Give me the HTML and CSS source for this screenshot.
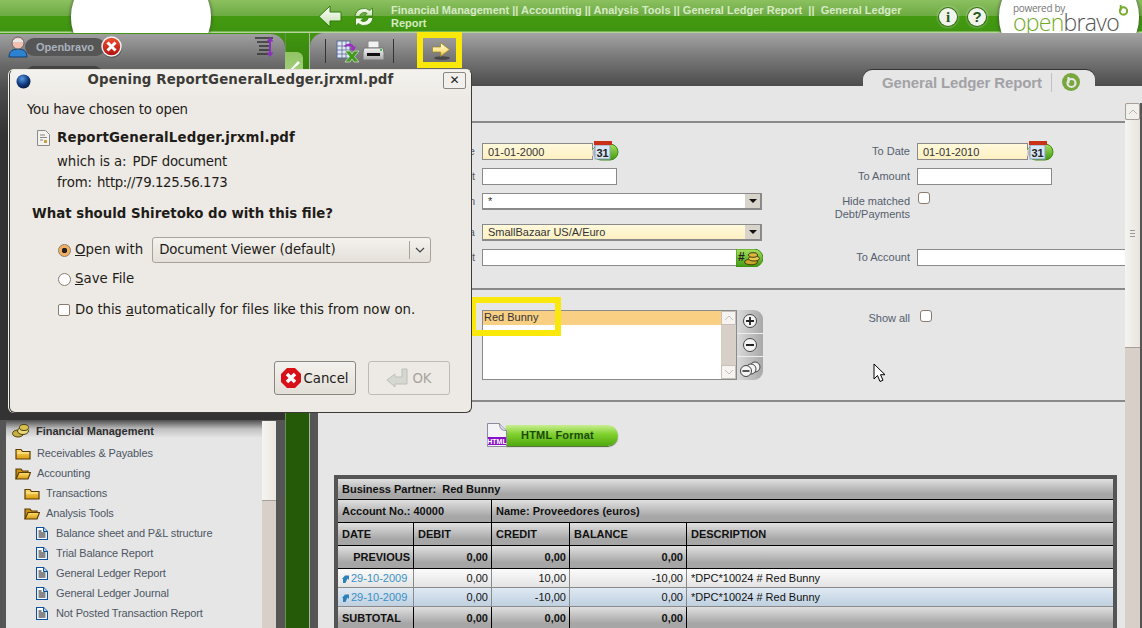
FILE: index.html
```html
<!DOCTYPE html>
<html lang="en">
<head>
<meta charset="utf-8">
<title>General Ledger Report</title>
<link rel="stylesheet" href="styles.css">
</head>
<body>
<svg class="sprite" aria-hidden="true">
  <defs>
    <linearGradient id="gYellow" x1="0" y1="0" x2="0" y2="1"><stop offset="0" stop-color="#fffbd0"/><stop offset=".6" stop-color="#fbe58a"/><stop offset="1" stop-color="#e2b030"/></linearGradient>
    <linearGradient id="gWhite" x1="0" y1="0" x2="0" y2="1"><stop offset="0" stop-color="#ffffff"/><stop offset="1" stop-color="#c4e0ac"/></linearGradient>
    <linearGradient id="gRed" x1="0" y1="0" x2="0" y2="1"><stop offset="0" stop-color="#f05030"/><stop offset="1" stop-color="#b01010"/></linearGradient>
    <linearGradient id="gGreen" x1="0" y1="0" x2="0" y2="1"><stop offset="0" stop-color="#a8e060"/><stop offset="1" stop-color="#3f9a10"/></linearGradient>
    <linearGradient id="gFolder" x1="0" y1="0" x2="0" y2="1"><stop offset="0" stop-color="#ffe070"/><stop offset="1" stop-color="#d89a10"/></linearGradient>
    <radialGradient id="gGlobe" cx=".4" cy=".3" r=".8"><stop offset="0" stop-color="#5a9ae0"/><stop offset=".55" stop-color="#123a80"/><stop offset="1" stop-color="#06102a"/></radialGradient>
    <linearGradient id="gGrey" x1="0" y1="0" x2="0" y2="1"><stop offset="0" stop-color="#f4f4f4"/><stop offset="1" stop-color="#a8a8a8"/></linearGradient>
    <symbol id="i-folder" viewBox="0 0 16 13"><path d="M1 2.500h5l1.500 2H15V12H1z" fill="url(#gFolder)" stroke="#5a3c04" stroke-width="1.200"/><path d="M2 6h12" stroke="#fff0a0"/></symbol>
    <symbol id="i-folder-open" viewBox="0 0 16 13"><path d="M1 12V2h5l1.500 2H13v2" fill="#c89018" stroke="#5a3c04" stroke-width="1.200"/><path d="M1 12l3-6.500h11.500L13 12z" fill="url(#gFolder)" stroke="#5a3c04" stroke-width="1.200"/></symbol>
    <symbol id="i-doc" viewBox="0 0 12 13"><path d="M.5.500h7l4 4v8H.5z" fill="#fff" stroke="#0d4f9c" stroke-width="1.200"/><path d="M7.500.5v4h4" fill="#bcd4ee" stroke="#0d4f9c"/><path d="M2.500 4h3M2.500 6h7M2.500 8h7M2.500 10h7" stroke="#111"/></symbol>
    <symbol id="i-coins" viewBox="0 0 18 14"><ellipse cx="6" cy="9.500" rx="5.500" ry="3.500" fill="#c8b040" stroke="#4a4010"/><ellipse cx="11" cy="7" rx="5.500" ry="3.500" fill="#e8d878" stroke="#4a4010"/><ellipse cx="12" cy="3.500" rx="4.500" ry="3" fill="#d8c050" stroke="#4a4010"/></symbol>
    <symbol id="i-cal" viewBox="0 0 27 21"><rect x="1" y="3" width="25" height="16" rx="8" fill="url(#gGreen)" stroke="#3f8a10"/><circle cx="5" cy="12" r="5" fill="#b8b8b8" stroke="#eee"/><rect x="3" y="4" width="15" height="14" fill="#d8e6f6" stroke="#8aa0c0"/><rect x="2" y="0" width="18" height="4" fill="#c83018"/><text x="10.500" y="15.500" class="cal-num">31</text></symbol>
    <symbol id="i-close-red" viewBox="0 0 22 22"><circle cx="11" cy="12" r="10" fill="#222" opacity=".4"/><circle cx="10.500" cy="10.500" r="9.500" fill="url(#gRed)" stroke="#f2f2f2" stroke-width="1.500"/><path d="M6.500 6.500l8 8M14.500 6.500l-8 8" stroke="#fff" stroke-width="3"/></symbol>
  </defs>
</svg>

<div class="app">
  <header class="topbar">
    <div class="blob"></div>
    <svg class="nav-back" viewBox="0 0 24 23" width="24" height="23"><path d="M1 11.500L12 1v6h11v9H12v6z" fill="url(#gWhite)" stroke="#2f7a0c"/></svg>
    <svg class="nav-refresh" viewBox="0 0 20 20" width="20" height="20"><path d="M1 9.500A9 9 0 0 1 15.800 3.500L18.500 1v8h-8l2.600-2.700A5 5 0 0 0 5.500 9.500z" fill="url(#gWhite)" stroke="#2f7a0c" stroke-width=".8"/><path d="M19 10.500A9 9 0 0 1 4.200 16.500L1.500 19v-8h8l-2.600 2.700A5 5 0 0 0 14.500 10.500z" fill="#f2fae8" stroke="#2f7a0c" stroke-width=".8"/></svg>
    <div class="crumbs">Financial Management || Accounting || Analysis Tools || General Ledger Report &nbsp;|| &nbsp;General Ledger Report</div>
    <span class="round-btn round-info">i</span>
    <span class="round-btn round-help">?</span>
    <div class="logo">
      <span class="logo-powered">powered by</span>
      <span class="logo-name"><span class="logo-open">open</span><span class="logo-bravo">bravo</span></span>
      <svg class="logo-mark" viewBox="0 0 12 12" width="11" height="11"><circle cx="6" cy="6.500" r="4" fill="none" stroke="#76ad2c" stroke-width="2.200"/><path d="M3 0v6" stroke="#76ad2c" stroke-width="2.200"/></svg>
    </div>
  </header>

  <div class="work">
    <aside class="sidebar">
      <div class="side-head">
        <div class="user-row">
          <svg class="user-icon" viewBox="0 0 20 22" width="20" height="22"><path d="M1 21c0-6 4-8 9-8s9 2 9 8z" fill="#2d82d0" stroke="#123f70"/><circle cx="10" cy="7" r="6" fill="#f0c0b0" stroke="#666"/><path d="M4.500 6a6 6 0 0 1 11 0z" fill="#e8e8e8"/></svg>
          <span class="user-pill">Openbravo</span>
          <svg class="user-close" width="22" height="22"><use href="#i-close-red"/></svg>
          <svg class="expand-icon" viewBox="0 0 22 22" width="22" height="22"><path d="M1 2h18M3 6h12M5 10h10M5 14h10M3 18h12" stroke="#333" stroke-width="1.500"/><path d="M16 1l3.500 4.500h-2.500v11h2.500L16 21l-3.500-4.500H15v-11h-2.500z" fill="#8a2fc0"/></svg>
        </div>
        <div class="user-row-two">
          <span class="role-dot"></span>
          <span class="role-pill"></span>
        </div>
      </div>
      <div class="menu">
        <nav class="tree">
          <div class="tree-head"><svg class="ti-coins" width="18" height="14"><use href="#i-coins"/></svg>Financial Management</div>
          <div class="tree-row lv1"><svg width="16" height="13"><use href="#i-folder"/></svg>Receivables &amp; Payables</div>
          <div class="tree-row lv1"><svg width="16" height="13"><use href="#i-folder-open"/></svg>Accounting</div>
          <div class="tree-row lv2"><svg width="16" height="13"><use href="#i-folder"/></svg>Transactions</div>
          <div class="tree-row lv2"><svg width="16" height="13"><use href="#i-folder-open"/></svg>Analysis Tools</div>
          <div class="tree-row lv3"><svg width="12" height="13"><use href="#i-doc"/></svg>Balance sheet and P&amp;L structure</div>
          <div class="tree-row lv3"><svg width="12" height="13"><use href="#i-doc"/></svg>Trial Balance Report</div>
          <div class="tree-row lv3"><svg width="12" height="13"><use href="#i-doc"/></svg>General Ledger Report</div>
          <div class="tree-row lv3"><svg width="12" height="13"><use href="#i-doc"/></svg>General Ledger Journal</div>
          <div class="tree-row lv3"><svg width="12" height="13"><use href="#i-doc"/></svg>Not Posted Transaction Report</div>
          <div class="tree-row lv3"><svg width="12" height="13"><use href="#i-folder"/></svg></div>
        </nav>
        <div class="side-scroll"><div class="side-thumb"></div></div>
      </div>
    </aside>

    <div class="splitter"><div class="split-tab"><svg viewBox="0 0 12 12" width="12" height="12"><path d="M1 11L9 2l2 2-8 7z" fill="#fff"/></svg></div></div>

    <main class="content">
      <div class="content-head">
        <div class="toolbar">
          <span class="tool-sep"></span>
          <svg class="tb-excel" viewBox="0 0 23 23" width="23" height="23"><rect x="1" y="1" width="13" height="17" fill="#dfe8f6" stroke="#5a6a90"/><path d="M1 6h13M1 10h13M1 14h13M6 1v17M10 1v17" stroke="#5a6a90" stroke-width=".8"/><path d="M8 6c4-4 9-3 10 1l2-1-2 5-4-2 2-1c-1-2-4-3-7-1z" fill="#9a2fc0"/><path d="M9 11h5l2 3 2-3h5l-4.500 5.500L23 22h-5l-2-3-2 3H9l4.500-5.500z" fill="#3f9a20" stroke="#eef6e0" stroke-width=".6"/></svg>
          <svg class="tb-print" viewBox="0 0 23 23" width="23" height="23"><path d="M6 1h11v7H6z" fill="#f2f2f2" stroke="#888"/><path d="M2 8h19l1 5v7H1v-7z" fill="url(#gGrey)" stroke="#777"/><rect x="5" y="13" width="13" height="3" fill="#111"/><rect x="18" y="9" width="2" height="2" fill="#40c040"/></svg>
          <span class="tool-sep tool-sep-b"></span>
          <svg class="tb-next" viewBox="0 0 18 18" width="18" height="18"><ellipse cx="10" cy="16" rx="8" ry="1.800" fill="#333" opacity=".7"/><path d="M.5 5h8V.8L17.500 7.500 8.500 14.500V10h-8z" fill="url(#gYellow)" stroke="#9a8420" stroke-width=".7"/></svg>
        </div>
        <div class="tab">
          <span class="tab-title">General Ledger Report</span>
          <svg viewBox="0 0 18 18" width="18" height="18"><circle cx="9" cy="9" r="9" fill="#78a83c"/><circle cx="9.500" cy="10" r="4" fill="none" stroke="#e6e6e6" stroke-width="2.200"/><path d="M6.500 4v6" stroke="#e6e6e6" stroke-width="2.200"/></svg>
        </div>
      </div>

      <div class="panel">
        <div class="scroll-body">
          <section class="section filters">
            <label class="lbl">From Date</label>
            <div class="field"><input class="inp inp-date req" value="01-01-2000"><svg class="cal" width="27" height="21"><use href="#i-cal"/></svg></div>
            <label class="lbl">To Date</label>
            <div class="field"><input class="inp inp-date req" value="01-01-2010"><svg class="cal" width="27" height="21"><use href="#i-cal"/></svg></div>

            <label class="lbl">From Amount</label>
            <div class="field"><input class="inp inp-num"></div>
            <label class="lbl">To Amount</label>
            <div class="field"><input class="inp inp-num"></div>

            <label class="lbl">Organization</label>
            <div class="field"><div class="select"><span>*</span><span class="sel-btn"></span></div></div>
            <label class="lbl lbl-two">Hide matched<br>Debt/Payments</label>
            <div class="field"><input class="check" type="checkbox"></div>

            <label class="lbl">Accounting Schema</label>
            <div class="field"><div class="select req"><span>SmallBazaar US/A/Euro</span><span class="sel-btn"></span></div></div>
            <span></span><span></span>

            <label class="lbl">From Account</label>
            <div class="field"><input class="inp inp-acct">
              <svg class="acct-btn" viewBox="0 0 27 18" width="27" height="18"><path d="M0 0h18a9 9 0 0 1 0 18H0z" fill="url(#gGreen)" stroke="#3f8a10"/><text x="2" y="12" class="acct-hash">#</text><ellipse cx="15" cy="13" rx="6.500" ry="2.800" fill="#c8a830" stroke="#4a3a08"/><ellipse cx="18" cy="9.500" rx="5.500" ry="2.500" fill="#e8c850" stroke="#4a3a08"/><ellipse cx="17" cy="6" rx="4.500" ry="2.300" fill="#d8b840" stroke="#4a3a08"/></svg></div>
            <label class="lbl">To Account</label>
            <div class="field"><input class="inp inp-wide"></div>
          </section>

          <section class="section partners">
            <label class="lbl">Business Partner</label>
            <div class="listwrap">
              <div class="listbox">
                <div class="list-items"><div class="list-sel">Red Bunny</div></div>
                <div class="list-scroll"><span class="sb-btn"><svg viewBox="0 0 10 6" width="10" height="6"><path d="M1 5l4-4 4 4" fill="none" stroke="#c8c0b8"/></svg></span><span class="sb-btn"><svg viewBox="0 0 10 6" width="10" height="6"><path d="M1 1l4 4 4-4" fill="none" stroke="#c8c0b8"/></svg></span></div>
              </div>
              <div class="list-actions">
                <span class="act"><svg viewBox="0 0 16 16" width="16" height="16"><circle cx="8" cy="8" r="6.500" fill="#f4f4f4" stroke="#444"/><path d="M4 8h8M8 4v8" stroke="#222" stroke-width="1.800"/></svg></span>
                <span class="act"><svg viewBox="0 0 16 16" width="16" height="16"><circle cx="8" cy="8" r="6.500" fill="#f4f4f4" stroke="#444"/><path d="M4 8h8" stroke="#222" stroke-width="1.800"/></svg></span>
                <span class="act"><svg viewBox="0 0 22 16" width="22" height="16"><circle cx="16" cy="6" r="5" fill="#f4f4f4" stroke="#444"/><circle cx="12" cy="8" r="5" fill="#f4f4f4" stroke="#444"/><circle cx="7" cy="10" r="5.500" fill="#f4f4f4" stroke="#444"/><path d="M3.500 10h7" stroke="#222" stroke-width="1.600"/></svg></span>
              </div>
            </div>
            <label class="lbl lbl-show">Show all</label>
            <div class="field field-top"><input class="check check-show" type="checkbox"></div>
          </section>

          <section class="section results">
            <div class="html-btn">
              <svg class="html-doc" viewBox="0 0 20 24" width="20" height="24"><path d="M.5.500h12l7 7v16H.5z" fill="#f4f4f8" stroke="#8a8a9a"/><path d="M12.500.5c0 5 2 7 7 7" fill="#d8dce8" stroke="#8a8a9a"/><rect x="1" y="14" width="18" height="8" fill="#8a10c8"/><text x="10" y="21" class="html-doc-t">HTML</text></svg>
              <span class="html-pill">HTML Format</span>
            </div>

            <div class="report-wrap">
            <table class="report">
              <colgroup><col class="c1"><col class="c2"><col class="c3"><col class="c4"><col class="c5"></colgroup>
              <tbody>
                <tr class="r-head h21"><td colspan="5">Business Partner:&nbsp; Red Bunny</td></tr>
                <tr class="r-head h23"><td colspan="2">Account No.: 40000</td><td colspan="3">Name: Proveedores (euros)</td></tr>
                <tr class="r-head h23"><td>DATE</td><td>DEBIT</td><td>CREDIT</td><td>BALANCE</td><td>DESCRIPTION</td></tr>
                <tr class="r-head h23"><td class="num">PREVIOUS</td><td class="num">0,00</td><td class="num">0,00</td><td class="num">0,00</td><td></td></tr>
                <tr class="r-data h19"><td><svg class="link-arrow" viewBox="0 0 7 8" width="7" height="8"><path d="M1 8V4H0l3-3.500h4V5L5.500 3.500 3.500 8z" fill="#2a80b8"/></svg><a class="link">29-10-2009</a></td><td class="num">0,00</td><td class="num">10,00</td><td class="num">-10,00</td><td>*DPC*10024 # Red Bunny</td></tr>
                <tr class="r-data r-alt h19"><td><svg class="link-arrow" viewBox="0 0 7 8" width="7" height="8"><path d="M1 8V4H0l3-3.500h4V5L5.500 3.500 3.500 8z" fill="#2a80b8"/></svg><a class="link">29-10-2009</a></td><td class="num">0,00</td><td class="num">-10,00</td><td class="num">0,00</td><td>*DPC*10024 # Red Bunny</td></tr>
                <tr class="r-head h23"><td>SUBTOTAL</td><td class="num">0,00</td><td class="num">0,00</td><td class="num">0,00</td><td></td></tr>
              </tbody>
            </table>
            </div>
          </section>
        </div>
        <div class="vscroll">
          <div class="vs-up"><svg viewBox="0 0 10 6" width="10" height="6"><path d="M1 5l4-4 4 4" fill="none" stroke="#b8b0a8"/></svg></div>
          <div class="vs-thumb"><span class="grip"></span></div>
        </div>
      </div>
    </main>
  </div>
</div>

<div class="hl hl-next"></div>
<div class="hl hl-bunny"></div>
<svg class="cursor" viewBox="0 0 14 20" width="14" height="20"><path d="M1 1v15l3.500-3.500L7 18.500l3-1.300-2.500-5.500H12z" fill="#fff" stroke="#000"/></svg>

<div class="dialog" role="dialog">
  <div class="dlg-title">
    <svg class="dlg-globe" viewBox="0 0 15 15" width="15" height="15"><circle cx="7.500" cy="7.500" r="7" fill="url(#gGlobe)"/></svg>
    <span class="dlg-title-text">Opening ReportGeneralLedger.jrxml.pdf</span>
    <span class="dlg-x">✕</span>
  </div>
  <div class="dlg-body">
    <p class="dlg-line">You have chosen to open</p>
    <div class="dlg-file">
      <svg viewBox="0 0 13 16" width="13" height="16"><path d="M.5.500h8l4 4v11H.5z" fill="#f4f2ee" stroke="#8a8a8a"/><path d="M3 5h5M3 7.500h7M3 10h3" stroke="#888"/><rect x="7" y="10" width="3" height="3" fill="#c8a040"/></svg>
      <strong class="dlg-name">ReportGeneralLedger.jrxml.pdf</strong>
    </div>
    <p class="dlg-info dlg-info-a">which is a:<span class="dlg-val-a">PDF document</span></p>
    <p class="dlg-info dlg-info-b">from:<span class="dlg-val-b">http://79.125.56.173</span></p>
    <p class="dlg-question">What should Shiretoko do with this file?</p>
    <div class="dlg-opt dlg-opt-open">
      <input class="radio" type="radio" name="act" checked>
      <span class="opt-label"><u>O</u>pen with</span>
      <div class="combo"><span class="combo-text">Document Viewer (default)</span><span class="combo-arrow"><svg viewBox="0 0 10 6" width="10" height="6"><path d="M1 1l4 4 4-4" fill="none" stroke="#444" stroke-width="1.200"/></svg></span></div>
    </div>
    <div class="dlg-opt dlg-opt-save">
      <input class="radio" type="radio" name="act">
      <span class="opt-label"><u>S</u>ave File</span>
    </div>
    <div class="dlg-opt dlg-opt-auto">
      <input class="gtk-check" type="checkbox">
      <span class="opt-label opt-auto">Do this <u>a</u>utomatically for files like this from now on.</span>
    </div>
    <div class="dlg-buttons">
      <button class="gtk-btn"><svg viewBox="0 0 20 20" width="20" height="20"><path d="M6 0h8l6 6v8l-6 6H6l-6-6V6z" fill="#d81018"/><path d="M6 6l8 8M14 6l-8 8" stroke="#fff" stroke-width="3.500"/></svg>Cancel</button>
      <button class="gtk-btn gtk-btn-off"><svg viewBox="0 0 22 20" width="22" height="20"><path d="M1 12l8-6v3h7V1h5v15H9v3z" fill="#d4d8d0" stroke="#bcc0b8"/></svg>OK</button>
    </div>
  </div>
</div>
</body>
</html>
```
FILE: styles.css
```css
* { box-sizing: border-box; }
html, body { margin: 0; padding: 0; width: 1142px; height: 628px; overflow: hidden; }
body { position: relative; font: 11px/13px "Liberation Sans", Arial, sans-serif; color: #333; background: #555; }
.sprite { position: absolute; width: 0; height: 0; }
svg { display: block; flex: none; }
.cal-num { font: bold 11px "Liberation Sans", sans-serif; fill: #222; text-anchor: middle; }
.acct-hash { font: bold 12px "Liberation Sans", sans-serif; fill: #222; }
.html-doc-t { font: bold 7px "Liberation Sans", sans-serif; fill: #fff; text-anchor: middle; }

.app { display: flex; flex-direction: column; height: 628px; }

/* top bar */
.topbar { flex: none; height: 33px; display: flex; align-items: center; overflow: hidden;
  background: linear-gradient(#8cc060, #6caa42 16px, #43990f 16px, #3f9510 31px, #b4d49c 32px, #b4d49c 33px); }
.blob { flex: none; width: 140px; height: 74px; margin: 0 0 0 71px; background: #fff; border-radius: 30px / 36px; box-shadow: 0 0 3px 1px rgba(60,60,60,.55); }
.nav-back { margin-left: 107px; }
.nav-refresh { margin-left: 12px; }
.crumbs { flex: none; margin-left: 17px; width: 526px; font-weight: bold; color: #d6ebc4; line-height: 13px; letter-spacing: .01px; }
.round-btn { flex: none; width: 18px; height: 18px; border-radius: 50%; background: #f2f2ec; box-shadow: 0 0 0 1px #2d6d10, 0 0 2px 2px rgba(255,255,255,.25);
  color: #1c5a18; font: bold 15px/18px "Liberation Serif", serif; text-align: center; }
.round-info { margin-left: 22px; }
.round-help { margin-left: 11px; font-family: "Liberation Sans", sans-serif; }
.logo { flex: none; position: relative; width: 140px; height: 74px; margin-left: 13px; background: #fff; border-radius: 30px / 36px; box-shadow: 0 0 3px 1px rgba(60,60,60,.55); padding: 23px 0 0 14px; }
.logo-powered { display: block; font: 10px/10px "Open Sans", sans-serif; color: #777; letter-spacing: -.3px; }
.logo-name { display: block; font: 300 23px/19px "Open Sans", sans-serif; letter-spacing: -.7px; }
.logo-open { color: #72ab2a; }
.logo-bravo { color: #555; }
.logo-mark { position: absolute; left: 119px; top: 25px; }

/* work area */
.work { flex: 1; display: flex; min-height: 0; background: linear-gradient(#409610, #255a08 100px); }

.sidebar { flex: none; width: 285px; display: flex; flex-direction: column; margin-top: 1px; border-top-right-radius: 14px; overflow: hidden; background: #555; }
.side-head { flex: none; height: 386px; padding: 1px 0 0 8px; background: linear-gradient(#a0a0a0, #6a6a6a 30px, #4c4c4c 56px, #333 100px); }
.user-row { display: flex; align-items: center; height: 24px; }
.user-icon { position: relative; z-index: 1; }
.user-pill { width: 80px; height: 18px; margin-left: -3px; padding-left: 11px; border-radius: 9px; background: #565656; color: #a9b2bc; font-weight: bold; line-height: 18px; }
.user-close { margin-left: -4px; position: relative; }
.expand-icon { margin-left: 131px; }
.user-row-two { display: flex; align-items: center; margin-top: 7px; padding-left: 10px; }
.role-dot { width: 8px; height: 8px; border-radius: 4px; background: #e8d890; }
.role-pill { width: 76px; height: 16px; border-radius: 8px; background: #444; }

.menu { flex: 1; display: flex; min-height: 0; padding: 1px 9px 0 6px; background: #555; }
.tree { flex: 1; min-width: 0; background: #e6e6e6; overflow: hidden; }
.tree-head { display: flex; align-items: center; height: 22px; padding: 0 0 2px 6px; font-weight: bold; color: #2e2e2e; background: linear-gradient(#5a5a5a, #c0c0c0 8px, #e6e6e6 17px); }
.ti-coins { margin-right: 6px; }
.tree-row { display: flex; align-items: center; height: 20px; color: #4c5664; letter-spacing: -.13px; }
.lv1 { padding-left: 9px; }
.lv2 { padding-left: 18px; }
.lv3 { padding-left: 30px; }
.lv1 svg, .lv2 svg { margin-right: 6px; }
.lv3 svg { margin-right: 8px; }
.side-scroll { flex: none; width: 14px; background: #d8d0c8; }
.side-thumb { height: 80px; background: linear-gradient(90deg, #f6f4f0, #ebe8e2); border-bottom: 1px solid #a8a098; }

.splitter { flex: none; width: 25px; padding-top: 19px; border-right: 1px solid #a8b8a0; border-left: 1px solid #6a9050; }
.split-tab { width: 18px; height: 70px; padding: 7px 0 0 4px; margin-left: -1px; background: linear-gradient(#90c464, #d0e6bc); border-radius: 0 6px 0 0; }

.content { flex: 1; min-width: 0; display: flex; flex-direction: column; background: #555; border-top-left-radius: 14px; }
.content-head { flex: none; height: 53px; border-top-left-radius: 14px; background: linear-gradient(#a4a4a4, #7c7c7c 22px, #4c4c4c 53px); padding-top: 5px; display: flex; flex-direction: column; }
.toolbar { display: flex; align-items: center; height: 26px; padding-left: 15px; }
.tool-sep { width: 1px; height: 24px; background: #333; }
.tb-excel { margin-left: 10px; }
.tb-print { margin-left: 3px; }
.tool-sep-b { margin-left: 8px; }
.tb-next { margin-left: 38px; }
.tab { position: relative; z-index: 1; display: flex; align-items: center; width: 232px; height: 16px; margin: 6px 0 0 553px; padding: 8px 0 0 19px; border-radius: 9px 9px 0 0; background: #e6e6e6; box-shadow: 0 -1px 0 #333; }
.tab-title { flex: none; white-space: nowrap; font: bold 15px/19px "Liberation Sans", sans-serif; letter-spacing: -.13px; color: #a2a2a6; padding-right: 9px; border-right: 1px solid #c0c0c0; margin-right: 10px; }

.panel { flex: 1; min-height: 0; display: flex; margin-left: 8px; background: #e6e6e6; }
.scroll-body { flex: 1; min-width: 0; overflow: hidden; padding-top: 35px; }
.vscroll { flex: none; width: 17px; margin-top: 17px; background: #d8d0c8; border-right: 2px solid #555; }
.vs-up { height: 17px; display: flex; align-items: center; justify-content: center; background: #f2f0ec; border: 1px solid #a8a098; border-radius: 2px; }
.vs-thumb { height: 228px; display: flex; align-items: center; justify-content: center; background: linear-gradient(90deg, #f6f4f0, #e8e5df); border-bottom: 1px solid #a8a098; }
.grip { width: 5px; height: 7px; border-top: 1px solid #999; border-bottom: 1px solid #999; background: linear-gradient(#999, #999) center/100% 1px no-repeat; }

.section { border-top: 2px solid #8a8a8a; }
.filters, .partners { display: grid; grid-template-columns: 157px 281px 140px 1fr; column-gap: 7px; }
.filters { grid-template-rows: 25px 25px 31px 25px 25px; padding: 20px 0 14px; }
.partners { grid-template-rows: 70px; padding: 20px 0; }
.lbl { text-align: right; color: #555f6e; padding-top: 2px; line-height: 13px; }
.lbl-show { padding-top: 2px; }
.field { display: flex; align-items: flex-start; min-width: 0; }
.inp { height: 17px; padding: 0 5px; border: 1px solid #8a8a8a; background: #fff; color: #333; font: 11px "Liberation Sans", sans-serif; outline: 0; border-radius: 0; }
.req { background: linear-gradient(#fff9dc, #fdf0c2); }
.inp-date { width: 111px; }
.inp-num { width: 135px; }
.inp-acct { width: 255px; }
.inp-wide { width: 100%; border-right: 0; }
.cal { margin: -2px 0 0 -1px; }
.acct-btn { margin-left: -1px; }
.select { width: 280px; height: 17px; display: flex; justify-content: space-between; padding-left: 5px; border: 1px solid #8a8a8a; border-right-width: 2px; border-bottom-width: 2px; background-color: #fff; line-height: 15px; color: #333; }
.select.req { background: linear-gradient(#fff9dc, #fdf0c2); }
.sel-btn { position: relative; width: 15px; background: #d8d4cc; }
.sel-btn::after { content: ""; position: absolute; left: 4px; top: 5px; border: 4px solid transparent; border-top-color: #111; border-bottom-width: 0; }
.check { appearance: none; width: 12px; height: 12px; margin: -1px 0 0 1px; background: #fff; border: 1px solid #8a7d70; border-radius: 3px; }
.check-show { margin: 0 0 0 3px; }

.listwrap { display: flex; height: 70px; width: 281px; }
.listbox { width: 255px; display: flex; border: 1px solid #8a8a8a; background: #fff; }
.list-items { flex: 1; }
.list-sel { height: 14px; padding-left: 1px; background: #f9cf84; line-height: 13px; color: #333; }
.list-scroll { flex: none; width: 15px; display: flex; flex-direction: column; justify-content: space-between; background: #d8d0c8; }
.sb-btn { height: 14px; display: flex; align-items: center; justify-content: center; background: #f6f4f0; border: 1px solid #c8c0b8; }
.list-actions { width: 26px; display: flex; flex-direction: column; border-radius: 0 9px 9px 0; background: linear-gradient(90deg, #dadada, #a8a8a8); overflow: hidden; }
.act { flex: 1; display: flex; align-items: center; justify-content: center; border-bottom: 1px solid #eee; }
.act:last-child { border-bottom: 0; }

.results { padding: 22px 0 0 16px; }
.html-btn { display: flex; align-items: center; height: 22px; margin-left: 153px; }
.html-doc { position: relative; z-index: 1; }
.html-pill { width: 112px; height: 21px; margin-left: -1px; padding-left: 15px; border-radius: 0 11px 11px 0; background: linear-gradient(#c8ee90, #7fd02c 45%, #4fa80e); box-shadow: 0 1px 1px #4a6a30; color: #1a4a0a; font-weight: bold; line-height: 20px; letter-spacing: .2px; }
.report-wrap { margin-top: 29px; width: 783px; border: 4px solid #555; border-bottom: 0; }
.report { width: 775px; table-layout: fixed; border-collapse: separate; border-spacing: 0; }
.c1 { width: 76px; } .c2 { width: 78px; } .c3 { width: 78px; } .c4 { width: 117px; } .c5 { width: 426px; }
.report td { padding: 0 4px; border-right: 1px solid #000; border-bottom: 1px solid #000; color: #111; white-space: nowrap; }
.report td:last-child { border-right: 0; }
.h21 td { height: 21px; } .h23 td { height: 23px; } .h19 td { height: 19px; }
.r-head td { background: linear-gradient(#e0e0e0, #a6a6a6 75%); font-weight: bold; }
.r-data td { background: linear-gradient(#fbfbfb, #e4e4e4); border-right-color: #8a8a8a; border-bottom-color: #8a8a8a; }
.r-alt td { background: linear-gradient(#dfe9f3, #bfd0e0); }
.report .num { text-align: right; padding-right: 3px; }
.link { color: #3a90c4; }
.link-arrow { display: inline-block; margin-right: 2px; vertical-align: -1px; }

/* overlays */
.hl { position: absolute; border: 6px solid #f9e80a; }
.hl-next { left: 417px; top: 32px; width: 45px; height: 36px; }
.hl-bunny { left: 470px; top: 297px; width: 91px; height: 39px; }
.cursor { position: absolute; left: 873px; top: 363px; }

/* GTK dialog */
.dialog { position: absolute; left: 9px; top: 69px; width: 463px; height: 344px; display: flex; flex-direction: column; background: #edeae5; border: 1px solid #3c3b37; border-top-color: #e8e4dc; border-radius: 6px; box-shadow: -1px 0 0 #f6f4f0; font: 13.330px/20px "DejaVu Sans", sans-serif; color: #1e1c18; }
.dlg-title { flex: none; height: 29px; position: relative; display: flex; align-items: flex-start; justify-content: space-between; padding: 4px 5px 0 6px; border-radius: 5px 5px 0 0; background: linear-gradient(#f4f2ee, #edeae5); }
.dlg-title-text { position: absolute; left: 0; right: 0; top: 0; text-align: center; font-weight: bold; color: #3c3b37; letter-spacing: .14px; }
.dlg-x { position: relative; width: 23px; height: 17px; margin-top: -2px; border: 1px solid #8a8680; border-radius: 2px; text-align: center; line-height: 15px; font-size: 12px; font-weight: bold; background: #f2f0ec; color: #222; }
.dlg-body { flex: 1; display: flex; flex-direction: column; padding: 1px 18px 17px 17px; min-height: 0; }
.dlg-body p { margin: 0; }
.dlg-line { letter-spacing: -.26px; }
.dlg-file { display: flex; align-items: center; gap: 7px; margin-top: 8px; padding-left: 10px; }
.dlg-name { letter-spacing: .17px; }
.dlg-info { padding-left: 30px; letter-spacing: -.1px; }
.dlg-body .dlg-info-a { margin-top: 4px; }
.dlg-body .dlg-info-b { margin-top: 1px; margin-bottom: -1px; }
.dlg-val-a { margin-left: 6px; letter-spacing: -.25px; }
.dlg-val-b { margin-left: 5px; letter-spacing: -.4px; }
.dlg-body .dlg-question { margin-top: 12px; padding-left: 5px; font-weight: bold; }
.dlg-opt { display: flex; align-items: center; padding-left: 31px; }
.dlg-opt-open { margin-top: 13px; height: 26px; }
.dlg-opt-save { margin-top: 6px; height: 20px; }
.dlg-opt-auto { margin-top: 11px; height: 20px; }
.opt-auto { letter-spacing: -.07px; }
.radio { appearance: none; flex: none; width: 13px; height: 13px; margin: 0 4px 0 0; border: 1px solid #8a7d70; border-radius: 50%; background: #fff; }
.radio:checked { background: radial-gradient(circle, #222 2.500px, #f4b060 3px); }
.gtk-check { appearance: none; flex: none; width: 12px; height: 12px; margin: 0 5px 0 0; border: 1px solid #8a7d70; border-radius: 2px; background: #fff; }
.combo { width: 279px; height: 26px; margin-left: 9px; display: flex; align-items: center; justify-content: space-between; padding-left: 6px; border: 1px solid #a8a298; border-radius: 3px; background: linear-gradient(#f4f2ee, #e4e0da); }
.combo-text { letter-spacing: -.15px; }
.combo-arrow { width: 21px; height: 18px; display: flex; align-items: center; justify-content: center; border-left: 1px solid #a8a298; }
.dlg-buttons { margin-top: auto; display: flex; justify-content: flex-end; gap: 12px; padding-right: 3px; }
.gtk-btn { width: 82px; height: 34px; display: flex; align-items: center; justify-content: center; gap: 2px; padding: 0; border: 1px solid #8a8680; border-radius: 3px; background: linear-gradient(#f4f2ee, #e2ded8); font: 13.330px "DejaVu Sans", sans-serif; color: #1e1c18; }
.gtk-btn-off { color: #a8a49c; border-color: #c0bcb4; background: #edeae5; gap: 4px; }
```
